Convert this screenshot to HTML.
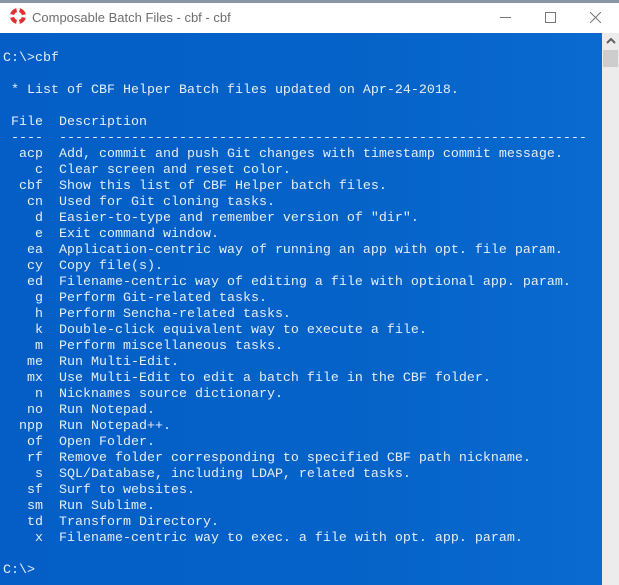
<!DOCTYPE html>
<html><head><style>
html,body{margin:0;padding:0;width:619px;height:585px;overflow:hidden;background:#fff}
#top{position:absolute;left:0;top:0;width:619px;height:3px;background:#8a96a6}
#title{position:absolute;left:0;top:3px;width:619px;height:30px;background:#fff}
#title .t{position:absolute;left:32px;top:7px;font:13px "Liberation Sans",sans-serif;color:#6e6e6e}
#con{position:absolute;left:0;top:33px;width:602px;height:552px;background:linear-gradient(90deg,#045ec6 0%,#0563c8 60%,#0a6ad0 100%)}
pre{position:absolute;left:3px;top:51px;margin:0;font-family:"Liberation Mono",monospace;font-size:13.33px;line-height:16px;color:#e6edf7}
#sb{position:absolute;left:602px;top:33px;width:17px;height:552px;background:#ececec}
#thumb{position:absolute;left:603px;top:50px;width:15px;height:17px;background:#cdcdcd}
</style></head><body>
<div id="top"></div>
<div id="title">
<svg style="position:absolute;left:10px;top:5px" width="16" height="16" viewBox="0 0 16 16"><circle cx="8" cy="8" r="6" fill="none" stroke="#e03030" stroke-width="4"/><circle cx="8" cy="8" r="6" fill="none" stroke="#fff" stroke-width="4" stroke-dasharray="3 6.4" stroke-dashoffset="1.5"/></svg>
<span class="t">Composable Batch Files - cbf - cbf</span>
<div style="position:absolute;left:500px;top:14px;width:11px;height:1px;background:#777"></div>
<div style="position:absolute;left:545px;top:9px;width:9px;height:9px;border:1px solid #777"></div>
<svg style="position:absolute;left:590px;top:9px" width="11" height="11"><path d="M0 0L11 11M11 0L0 11" stroke="#777" stroke-width="1"/></svg>
</div>
<div id="con"></div>
<div id="sb"></div>
<svg style="position:absolute;left:606px;top:37px" width="10" height="8"><path d="M1 6L5 2L9 6" stroke="#606060" stroke-width="2" fill="none"/></svg>
<div id="thumb"></div>
<pre>C:\&gt;cbf

 * List of CBF Helper Batch files updated on Apr-24-2018.

 File  Description
 ----  ------------------------------------------------------------------
  acp  Add, commit and push Git changes with timestamp commit message.
    c  Clear screen and reset color.
  cbf  Show this list of CBF Helper batch files.
   cn  Used for Git cloning tasks.
    d  Easier-to-type and remember version of "dir".
    e  Exit command window.
   ea  Application-centric way of running an app with opt. file param.
   cy  Copy file(s).
   ed  Filename-centric way of editing a file with optional app. param.
    g  Perform Git-related tasks.
    h  Perform Sencha-related tasks.
    k  Double-click equivalent way to execute a file.
    m  Perform miscellaneous tasks.
   me  Run Multi-Edit.
   mx  Use Multi-Edit to edit a batch file in the CBF folder.
    n  Nicknames source dictionary.
   no  Run Notepad.
  npp  Run Notepad++.
   of  Open Folder.
   rf  Remove folder corresponding to specified CBF path nickname.
    s  SQL/Database, including LDAP, related tasks.
   sf  Surf to websites.
   sm  Run Sublime.
   td  Transform Directory.
    x  Filename-centric way to exec. a file with opt. app. param.

C:\&gt;</pre>
</body></html>
